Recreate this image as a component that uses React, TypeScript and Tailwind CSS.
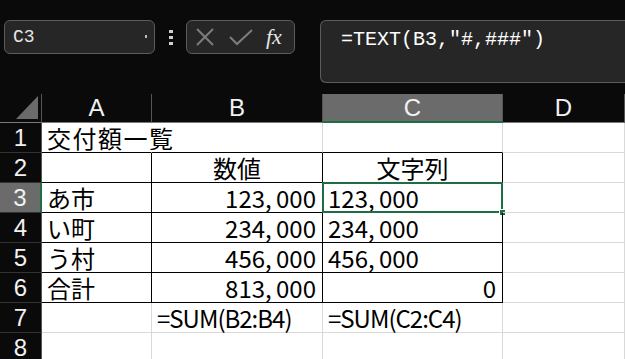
// Excel 風シート - TEXT関数の例

type Align = 'left' | 'right' | 'center';

interface CellDef {
  text?: string;
  align?: Align;
  border?: string; // 右・下の罫線クラス
  num?: boolean;
  extra?: string; // 文字間など
}

const JP = "font-['Noto_Sans_CJK_JP','Noto_Sans',sans-serif]";
const HEAD = "font-['Liberation_Sans_Narrow','Liberation_Sans',Arial,sans-serif]";

const G = 'border-r border-b border-r-[#d9d9d9] border-b-[#d9d9d9]';
const BLK = 'border-r border-b border-r-black border-b-black';
const TOPROW = 'border-r border-b border-r-[#d9d9d9] border-b-black';

const rows: CellDef[][] = [
  [
    { text: '交付額一覧', border: 'border-r border-b border-r-transparent border-b-black', extra: 'tracking-[1.5px]' },
    { border: TOPROW },
    { border: TOPROW },
    { border: G },
  ],
  [
    { border: BLK },
    { text: '数値', align: 'center', border: BLK },
    { text: '文字列', align: 'center', border: BLK },
    { border: G },
  ],
  [
    { text: 'あ市', border: BLK },
    { text: '123,000', align: 'right', border: BLK, num: true },
    { text: '123,000', border: BLK, num: true },
    { border: G },
  ],
  [
    { text: 'い町', border: BLK },
    { text: '234,000', align: 'right', border: BLK, num: true },
    { text: '234,000', border: BLK, num: true },
    { border: G },
  ],
  [
    { text: 'う村', border: BLK },
    { text: '456,000', align: 'right', border: BLK, num: true },
    { text: '456,000', border: BLK, num: true },
    { border: G },
  ],
  [
    { text: '合計', border: BLK },
    { text: '813,000', align: 'right', border: BLK, num: true },
    { text: '0', align: 'right', border: BLK },
    { border: G },
  ],
  [
    { border: G },
    { text: '=SUM(B2:B4)', border: G, extra: 'tracking-[-1px]' },
    { text: '=SUM(C2:C4)', border: G, extra: 'tracking-[-1px]' },
    { border: G },
  ],
  [{ border: G }, { border: G }, { border: G }, { border: G }],
];

const alignClass: Record<Align, string> = {
  left: 'justify-start pl-[5px]',
  right: 'justify-end pr-[6px]',
  center: 'justify-center',
};

// カンマを MS ゴシック風に広めに表示
function Num({ v }: { v: string }) {
  const parts = v.split(',');
  return (
    <span>
      {parts[0]}
      {parts.length > 1 && <span className="inline-block w-[11px]">,</span>}
      {parts[1]}
    </span>
  );
}

function Cell({ cell, selected }: { cell: CellDef; selected?: boolean }) {
  return (
    <div
      className={`relative h-[30px] flex items-center whitespace-nowrap overflow-visible text-[24px] leading-[30px] text-black ${JP} ${cell.border ?? G} ${alignClass[cell.align ?? 'left']}`}
    >
      {cell.text && (cell.num ? <Num v={cell.text} /> : <span className={cell.extra ?? ''}>{cell.text}</span>)}
      {selected && (
        <>
          <div className="absolute left-[-1px] top-[-1px] right-[-1px] bottom-[-1px] border-2 border-[#1e6e43]" />
          <div className="absolute right-[-4px] bottom-[-4px] w-[7px] h-[7px] bg-[#1e6e43] border border-white" />
        </>
      )}
    </div>
  );
}

function TopBar() {
  return (
    <div className="h-[94px] flex items-start pt-[20px] pl-[4px] shrink-0">
      {/* 名前ボックス */}
      <div className="w-[151px] h-[34px] rounded-[6px] border border-[#5c5c5c] bg-[#262626] flex items-center pl-[8px] relative">
        <span className="text-[18px] text-[#e6e6e6] font-['Liberation_Mono',monospace]">C3</span>
        <span className="absolute right-[7px] top-[14px] w-[2px] h-[3px] bg-[#bbbbbb]" />
      </div>
      {/* 区切り */}
      <div className="w-[31px] h-[34px] flex flex-col items-center justify-center gap-[3px]">
        <span className="w-[4px] h-[3px] bg-[#d0d0d0]" />
        <span className="w-[4px] h-[3px] bg-[#d0d0d0]" />
        <span className="w-[4px] h-[3px] bg-[#d0d0d0]" />
      </div>
      {/* キャンセル / 確定 / 関数 */}
      <div className="w-[109px] h-[34px] rounded-[6px] border border-[#5c5c5c] bg-[#262626] flex items-center pl-[8px]">
        <svg width="20" height="20" viewBox="0 0 20 20" className="mr-[13px]">
          <path d="M2 2 L18 18 M18 2 L2 18" stroke="#7d7d7d" strokeWidth="2" fill="none" />
        </svg>
        <svg width="26" height="20" viewBox="0 0 26 20" className="mr-[12px]">
          <path d="M2 10 L9 17 L24 3" stroke="#7d7d7d" strokeWidth="2" fill="none" />
        </svg>
        <span className="text-[22px] italic text-[#e6e6e6] font-['Liberation_Serif',serif] leading-none">fx</span>
      </div>
      {/* 数式バー */}
      <div className="ml-[25px] flex-1 h-[63px] rounded-l-[6px] border border-r-0 border-[#5c5c5c] bg-[#262626] pl-[20px] pt-[6px]">
        <span className="text-[20px] text-white font-['Liberation_Mono',monospace] leading-[24px]">=TEXT(B3,"#,###")</span>
      </div>
    </div>
  );
}

function Sheet() {
  const cols = ['A', 'B', 'C', 'D'];
  return (
    <div className="grid grid-cols-[42px_110px_171px_180px_1fr] bg-white">
      {/* 見出し行 */}
      <div className="h-[29px] bg-[#0a0a0a] border-r border-b border-r-[#555555] border-b-[#7a7a7a] flex items-end justify-end pr-[3px] pb-[3px]">
        <svg width="22" height="23" viewBox="0 0 22 23">
          <path d="M0 23 L22 23 L22 0 Z" fill="#6b6b6b" />
        </svg>
      </div>
      {cols.map((c) => (
        <div
          key={c}
          className={`h-[29px] flex items-center justify-center text-[24px] text-[#f2f2f2] ${HEAD} ${
            c === 'C'
              ? 'bg-[#6b6b6b] border-b-2 border-b-[#1e6e43] border-r border-r-[#555555]'
              : 'bg-[#0a0a0a] border-b border-b-[#7a7a7a] border-r border-r-[#555555]'
          }`}
        >
          {c}
        </div>
      ))}

      {rows.map((row, r) => (
        <div key={r} className="contents">
          <div
            className={`h-[30px] flex items-center justify-center text-[24px] text-[#f2f2f2] ${HEAD} border-b border-b-[#333333] ${
              r === 2 ? 'bg-[#6b6b6b] border-r-2 border-r-[#1e6e43]' : 'bg-[#0a0a0a] border-r border-r-[#555555]'
            }`}
          >
            {r + 1}
          </div>
          {row.map((cell, c) => (
            <Cell key={c} cell={cell} selected={r === 2 && c === 2} />
          ))}
        </div>
      ))}
    </div>
  );
}

export default function App() {
  return (
    <div className="w-[625px] h-[359px] bg-[#0a0a0a] overflow-hidden flex flex-col">
      <TopBar />
      <Sheet />
    </div>
  );
}
